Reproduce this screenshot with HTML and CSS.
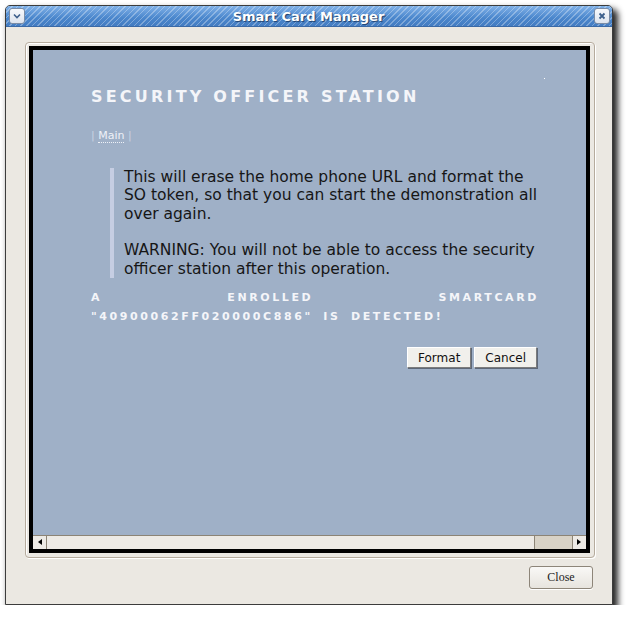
FILE: index.html
```html
<!DOCTYPE html>
<html lang="en">
<head>
  <meta charset="UTF-8">
  <title>Smart Card Manager</title>
  <link rel="stylesheet" href="styles.css">
</head>
<body>
  <div class="window">
    <div class="titlebar">
      <span class="tb-btn">
        <svg width="10" height="10" viewBox="0 0 10 10"><path d="M2 3.5 L5 6.5 L8 3.5" fill="none" stroke="#3d5f8c" stroke-width="1.6"/></svg>
      </span>
      <span class="tb-title">Smart Card Manager</span>
      <span class="tb-btn">
        <svg width="10" height="10" viewBox="0 0 10 10"><path d="M2.5 2.5 L7.5 7.5 M7.5 2.5 L2.5 7.5" fill="none" stroke="#3d5f8c" stroke-width="1.8"/></svg>
      </span>
    </div>

    <div class="window-body">
      <div class="frame">
        <div class="viewport">
          <div class="page">
            <span class="speck"></span>
            <h1 class="station-title">SECURITY OFFICER STATION</h1>
            <div class="crumbs">| <a class="crumb-link">Main</a> |</div>

            <blockquote class="notice">
              This will erase the home phone URL and format the SO token, so that you can start the demonstration all over again.<br><br>
              WARNING: You will not be able to access the security officer station after this operation.
            </blockquote>

            <p class="status">A enrolled smartcard "40900062FF020000C886" is detected!</p>

            <div class="actions">
              <button class="web-btn">Format</button>
              <button class="web-btn">Cancel</button>
            </div>
          </div>

          <div class="hscroll">
            <span class="sb-arrow sb-left"></span>
            <span class="sb-track"></span>
            <span class="sb-thumb"></span>
            <span class="sb-arrow sb-right"></span>
          </div>
        </div>
      </div>

      <div class="footer">
        <button class="close-btn">Close</button>
      </div>
    </div>
  </div>
</body>
</html>
```

FILE: styles.css
```css
:root {
  --window-bg: #ebe8e2;
  --page-bg: #9fb0c7;
  --frame-line: #b5ab9d;
  --text-dark: #161616;
}

body {
  margin: 0;
  background: #fff;
  font-family: "DejaVu Sans", sans-serif;
}

.window {
  margin: 5px 0 0 5px;
  width: 608px;
  height: 600px;
  box-sizing: border-box;
  border: 1px solid #3c3c3c;
  border-radius: 5px 5px 0 0;
  background: var(--window-bg);
  box-shadow: 4px 5px 6px 1px rgba(0, 0, 0, 0.85);
  display: flex;
  flex-direction: column;
  overflow: hidden;
}

/* title bar */
.titlebar {
  height: 20px;
  border-bottom: 1px solid #3a69a6;
  display: flex;
  align-items: center;
  padding: 0 2px 0 3px;
  background:
    repeating-linear-gradient(135deg, rgba(255, 255, 255, 0.3) 0 1px, transparent 1px 4px),
    linear-gradient(#80b1e8, #4a86cc 60%, #437cc2);
}

.tb-btn {
  width: 14px;
  height: 14px;
  border: 1px solid #7a8ca6;
  border-radius: 3px;
  background: linear-gradient(#f7f9fc, #dde4ee);
  display: flex;
  align-items: center;
  justify-content: center;
}

.tb-title {
  flex: 1;
  text-align: center;
  color: #fff;
  font-weight: bold;
  font-size: 13px;
  text-shadow: 1px 1px 1px #1f3f6b;
  padding-right: 2px;
}

/* body */
.window-body {
  flex: 1;
  padding: 15px 17px 0 19px;
  display: flex;
  flex-direction: column;
}

.frame {
  height: 516px;
  box-sizing: border-box;
  border: 1px solid var(--frame-line);
  border-radius: 4px;
  box-shadow: inset 1px 1px 0 #fff, 1px 1px 0 #fff;
  padding: 3px 4px 4px 3px;
}

.viewport {
  height: 507px;
  box-sizing: border-box;
  border: 4px solid #000;
  display: flex;
  flex-direction: column;
}

.page {
  position: relative;
  height: 485px;
  box-sizing: border-box;
  background: var(--page-bg);
  padding: 37px 47px 0 58px;
}

.speck {
  position: absolute;
  left: 511px;
  top: 28px;
  width: 1px;
  height: 1px;
  background: #fff;
}

.station-title {
  margin: 0;
  font-size: 16px;
  line-height: 20px;
  font-weight: bold;
  letter-spacing: 3.2px;
  color: #f4f5f9;
}

.crumbs {
  margin-top: 21px;
  font-size: 11px;
  line-height: 16px;
  color: #c9d2e2;
}

.crumb-link {
  color: #eef1f7;
  border-bottom: 1px dotted #eef1f7;
}

.notice {
  margin: 24px 0 0 19px;
  border-left: 4px solid #c6cee3;
  padding-left: 10px;
  font-size: 15.5px;
  line-height: 18.35px;
  color: var(--text-dark);
}

.status {
  margin: 10px 0 0;
  font-size: 11px;
  line-height: 19px;
  font-weight: bold;
  letter-spacing: 2.6px;
  word-spacing: 4px;
  text-transform: uppercase;
  text-align: justify;
  color: #f4f5f9;
}

.actions {
  margin-top: 21px;
  display: flex;
  justify-content: flex-end;
  gap: 3px;
  padding-right: 2px;
}

.web-btn {
  height: 21px;
  padding: 0 10px;
  font-family: "DejaVu Sans", sans-serif;
  font-size: 12px;
  color: #111;
  background: #f1f0ec;
  border: 1px solid;
  border-color: #fff #7c7c7c #7c7c7c #fff;
  box-shadow: 1px 1px 0 #5e6878;
}

/* horizontal scrollbar */
.hscroll {
  height: 14px;
  box-sizing: border-box;
  border-top: 1px solid #8c8476;
  background: #edeae5;
  display: flex;
}

.sb-arrow {
  width: 13px;
  position: relative;
}

.sb-left {
  border-right: 1px solid #8c8476;
}

.sb-right {
  border-left: 1px solid #8c8476;
}

.sb-left::after,
.sb-right::after {
  content: "";
  position: absolute;
  top: 3px;
  border: 3.5px solid transparent;
}

.sb-left::after {
  left: 2px;
  border-right: 4px solid #000;
}

.sb-right::after {
  left: 4px;
  border-left: 4px solid #000;
}

.sb-track {
  flex: 1;
}

.sb-thumb {
  width: 37px;
  background: #d8d2c6;
  border-left: 1px solid #8c8476;
}

/* footer */
.footer {
  margin-top: 8px;
  display: flex;
  justify-content: flex-end;
  padding-right: 2px;
}

.close-btn {
  width: 64px;
  height: 23px;
  font-family: "Liberation Serif", serif;
  font-size: 12px;
  color: #222;
  background: linear-gradient(#f9f8f6, #e7e4de);
  border: 1px solid #8d8579;
  border-radius: 3px;
  box-shadow: 0 1px 0 #fff;
}
```
